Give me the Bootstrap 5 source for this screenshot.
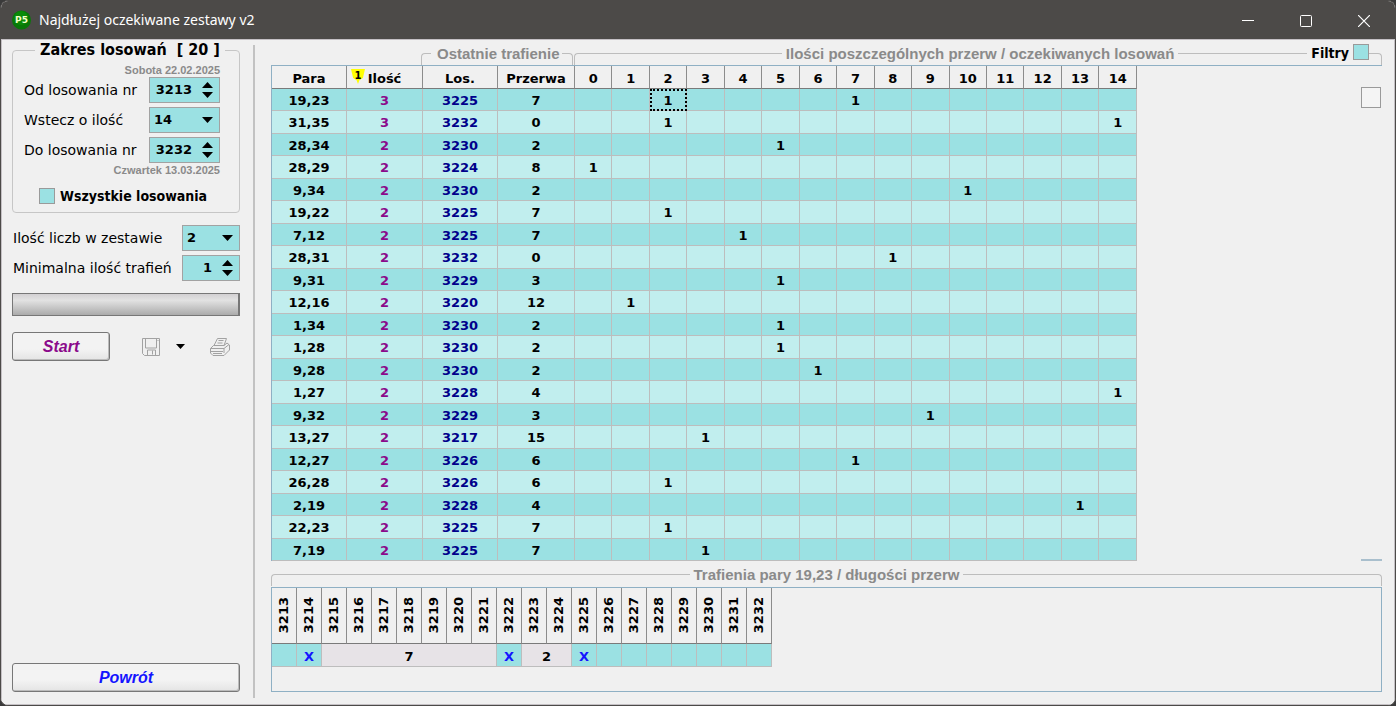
<!DOCTYPE html>
<html lang="pl">
<head>
<meta charset="utf-8">
<meta name="viewport" content="width=device-width, initial-scale=1">
<title>Najdłużej oczekiwane zestawy v2</title>
<link href="https://cdn.jsdelivr.net/npm/bootstrap@5.3.0/dist/css/bootstrap.min.css" rel="stylesheet">
<style>
  :root { --face:#f0f0f0; --aqua:#9be1e3; --aqua-light:#c1eeee; --line:#bdbdbd; --frame:#8fb0c4; --dim:#8a8a8a; }
  body { background:#3a3a3a; color:#000; font:14px/18px "DejaVu Sans", sans-serif; }
  .app-window { background:var(--face); border:1px solid #4c4a48; border-radius:8px; overflow:hidden; }
  .title-bar { background:#4c4a48; color:#fff; height:38px; font:14px/20px "Noto Sans", sans-serif; padding:0 2px 0 11px; }
  .title-bar .win-btn { width:58px; height:38px; border:0; background:none; color:#fff; padding:0; }
  .client { border:1px solid #c4c0c4; }
  .side-pane { width:251px; padding:0 13px 12px 10px; }
  .side-pane label { padding-left:1px; }
  .v-rule { width:2px; margin:5px 0 6px; background:#c2c2c2; }
  .range-box { border:1px solid #c6c6c6; border-radius:4px; padding:3px 19px 7px 10px; }
  .range-box legend { float:none; width:auto; margin:0 0 0 12px; padding:0 5px; font:bold 16px/20px "DejaVu Sans Condensed", "DejaVu Sans", sans-serif; white-space:pre; }
  .date-note { font:bold 11px/14px "Liberation Sans", sans-serif; color:var(--dim); text-align:right; }
  .all-draws { margin:10px 0 0 16px; }
  .field-box { width:71px; height:26px; background-color:var(--aqua); border:1px solid #a2a2a2; border-radius:0; font:bold 13px/18px "DejaVu Sans", sans-serif; color:#000; }
  .field-box.narrow { width:58px; }
  select.field-box { padding:0 22px 0 4px; background-position:right 6px center; background-size:11px 6px;
    background-image:url("data:image/svg+xml,%3Csvg xmlns='http://www.w3.org/2000/svg' viewBox='0 0 11 6'%3E%3Cpath d='M0 0h11L5.500 6z'/%3E%3C/svg%3E"); }
  .field-box input { min-width:0; flex:1; width:0; border:0; padding:0; background:none; font:inherit; text-align:right; appearance:textfield; outline:0; }
  .field-box input::-webkit-inner-spin-button { display:none; }
  .spin { width:11px; margin:0 6px 0 10px; }
  .spin button { border:0; padding:0; background:none; height:6px; line-height:0; }
  .tick { appearance:none; width:16px; height:16px; margin:0; background:var(--aqua); border:1px solid #9a9a9a; }
  .tick.big { width:20px; height:21px; background:#f4f4f4; }
  .strong-label { font:bold 14px/18px "DejaVu Sans Condensed", "DejaVu Sans", sans-serif; }
  .meter { height:23px; margin:12px 0 16px; border:1px solid #777; border-right-width:2px; background:linear-gradient(#d2d0d2,#e2e2e2 30%,#ababab); }
  .push { height:29px; padding:0; border:1px solid #777; border-radius:3px; background:linear-gradient(#f3f3f3 60%,#e4e4e4); box-shadow:inset -1px -1px #bbb; font:italic bold 16px/20px "Liberation Sans", sans-serif; }
  .push.start { width:98px; color:#8b0a8b; }
  .push.back { color:#1414ff; }
  .tool { border:0; padding:0; background:none; line-height:0; }
  .work-pane { padding:4px 12px 12px 16px; }
  .caption-text { font:bold 15px/20px "Liberation Sans", sans-serif; color:var(--dim); white-space:nowrap; }
  .edge-l, .edge-t, .edge-r { height:12px; border-top:1px solid var(--line); margin-top:9px; }
  .edge-l { border-left:1px solid var(--line); border-top-left-radius:4px; }
  .edge-r { border-right:1px solid var(--line); border-top-right-radius:4px; }
  .first-bracket { width:152px; margin-left:150px; }
  .first-bracket .edge-l { width:10px; }
  .first-bracket .caption-text { padding:0 2px 0 6px; }
  .second-bracket .edge-l { margin-left:1px; }
  .edge-t { width:129px; }
  .tail { width:13px; }
  .hits-head { height:22px; margin-top:4px; }
  .frame-top { border-top:1px solid var(--frame); border-left:1px solid var(--frame); }
  .grid-tab { border-collapse:separate; border-spacing:0; table-layout:fixed; font:bold 13px/18px "DejaVu Sans", sans-serif; text-align:center; }
  .grid-tab th, .grid-tab td { padding:0; overflow:hidden; border-right:1px solid var(--line); border-bottom:1px solid var(--line); white-space:nowrap; }
  .grid-tab th { border-right-color:#8c8c8c; border-bottom-color:#7a7a7a; }
  .c75 { width:75px; } .c76 { width:76px; } .c77 { width:77px; }
  .pairs { width:865px; }
  .pairs th { height:23px; padding-top:3px; }
  .pairs td { height:23px; padding-top:2px; background:var(--aqua-light); }
  .pairs tr:nth-child(odd) td { height:22px; background:var(--aqua); }
  .pairs td:nth-child(2) { color:#8b0a8b; }
  .pairs td:nth-child(3) { color:#00008b; }
  .pairs td.picked { outline:2px dotted #000; outline-offset:-2px; }
  .sort-mark { left:4px; top:3px; width:14px; height:15px; background:#ff0; clip-path:polygon(0 0,100% 0,85% 60%,60% 75%,50% 100%,40% 75%,15% 60%); font-size:10px; line-height:14px; }
  .hits-frame { border:1px solid var(--frame); }
  .hits { width:500px; }
  .hits th { height:56px; padding-top:5px; }
  .hits th span { writing-mode:vertical-rl; transform:rotate(180deg); line-height:20px; }
  .hits td { height:23px; padding-top:3px; background:var(--aqua); color:#1414ff; }
  .hits td.gap-run { background:#e7e3e7; color:#000; }
  .scroll-end { width:21px; border-bottom:2px solid #a9bfcd; padding-top:21px; }
</style>
</head>
<body>
<div class="app-window vh-100 d-flex flex-column">
  <header class="title-bar d-flex align-items-center flex-shrink-0">
    <svg width="19" height="20" viewBox="0 0 19 20"><circle cx="9.500" cy="10" r="9.500" fill="#087808"/><circle cx="9" cy="8" r="7" fill="#0a8a08"/><text x="9.500" y="13" text-anchor="middle" font-family="DejaVu Sans" font-weight="bold" font-size="9" fill="#f4ffc8">P5</text></svg>
    <span class="flex-grow-1 ps-1 ms-1 me-auto title-text">Najdłużej oczekiwane zestawy v2</span>
    <button class="win-btn" aria-label="Minimalizuj"><svg width="12" height="12"><path d="M0 5.500h12" stroke="#fff"/></svg></button>
    <button class="win-btn" aria-label="Maksymalizuj"><svg width="12" height="12"><rect x=".5" y=".5" width="11" height="11" rx="1" fill="none" stroke="#fff"/></svg></button>
    <button class="win-btn" aria-label="Zamknij"><svg width="12" height="12"><path d="M0 0l12 12M12 0L0 12" stroke="#fff" stroke-width="1.200"/></svg></button>
  </header>

  <main class="client d-flex flex-grow-1">
    <aside class="side-pane d-flex flex-column flex-shrink-0">
      <fieldset class="range-box">
        <legend>Zakres losowań  [ 20 ]</legend>
        <div class="date-note">Sobota 22.02.2025</div>
        <div class="d-flex flex-column gap-1">
          <div class="d-flex justify-content-between align-items-center">
            <label for="from">Od losowania nr</label>
            <div class="field-box d-flex align-items-center"><input id="from" type="number" value="3213"><span class="spin d-flex flex-column gap-1" data-spin></span></div>
          </div>
          <div class="d-flex justify-content-between align-items-center">
            <label for="back">Wstecz o ilość</label>
            <select id="back" class="form-select field-box"><option>14</option></select>
          </div>
          <div class="d-flex justify-content-between align-items-center">
            <label for="to">Do losowania nr</label>
            <div class="field-box d-flex align-items-center"><input id="to" type="number" value="3232"><span class="spin d-flex flex-column gap-1" data-spin></span></div>
          </div>
        </div>
        <div class="date-note">Czwartek 13.03.2025</div>
        <div class="all-draws d-flex align-items-center">
          <input class="tick" type="checkbox" id="all"><label class="strong-label ms-1" for="all">Wszystkie losowania</label>
        </div>
      </fieldset>

      <div class="d-flex flex-column gap-1 mt-2 pt-1">
        <div class="d-flex justify-content-between align-items-center">
          <label for="count">Ilość liczb w zestawie</label>
          <select id="count" class="form-select field-box narrow"><option>2</option></select>
        </div>
        <div class="d-flex justify-content-between align-items-center">
          <label for="min">Minimalna ilość trafień</label>
          <div class="field-box narrow d-flex align-items-center"><input id="min" type="number" value="1"><span class="spin d-flex flex-column gap-1" data-spin></span></div>
        </div>
      </div>
      <div class="meter" role="progressbar" aria-label="Postęp"></div>
      <div class="d-flex align-items-center">
        <button class="push start">Start</button>
        <button class="tool ms-4 ps-2" aria-label="Zapisz"><svg width="18" height="18" fill="none" stroke="#a2a2a2"><path d="M.5.5h17v17h-15l-2-2z"/><path d="M3.500.5v9.500h11V.5M5.500 17v-5h8v5M10.500 12.500v4M15.500 2.500h1"/></svg></button>
        <button class="tool ms-3" aria-label="Opcje zapisu"><svg width="9" height="6"><path d="M0 0h9L4.500 5z"/></svg></button>
        <button class="tool ms-4" aria-label="Drukuj"><svg width="22" height="18" fill="none" stroke="#a2a2a2"><path d="M5 7.500l3.500-7h9L15 7.500M9.500 2.500h5M8.500 5h5"/><path d="M4.500 7.500h10.500l3-2.500 2.500 2v5L15 17.500H4L1.500 15v-4.500zM1.500 10.500H15l5-4M15 10.500v4.500M2 13.500h12M4 15.500h9"/></svg></button>
      </div>
      <button class="push back mt-auto">Powrót</button>
    </aside>
    <div class="v-rule flex-shrink-0"></div>

    <section class="work-pane d-flex flex-column flex-grow-1">
      <div class="d-flex">
        <div class="first-bracket d-flex">
          <div class="edge-l"></div><span class="caption-text">Ostatnie trafienie</span><div class="edge-r flex-grow-1"></div>
        </div>
        <div class="second-bracket d-flex flex-grow-1">
          <div class="edge-l flex-grow-1"></div>
          <span class="caption-text px-1">Ilości poszczególnych przerw / oczekiwanych losowań</span>
          <div class="edge-t"></div>
          <label class="strong-label px-1" for="filters">Filtry</label><input class="tick" type="checkbox" id="filters">
          <div class="edge-r tail"></div>
        </div>
      </div>
      <div class="frame-top d-flex justify-content-between">
        <table class="grid-tab pairs">
          <colgroup><col class="c75"><col class="c76"><col class="c75"><col class="c77"></colgroup>
          <thead><tr id="head"><th>Para</th><th class="position-relative"><span class="sort-mark position-absolute">1</span>Ilość</th><th>Los.</th><th>Przerwa</th></tr></thead>
          <tbody id="rows"></tbody>
        </table>
        <div class="scroll-end"><input class="tick big" type="checkbox" aria-label="Filtr"></div>
      </div>

      <div class="d-flex hits-head">
        <div class="edge-l flex-grow-1"></div>
        <span class="caption-text px-1">Trafienia pary 19,23 / długości przerw</span>
        <div class="edge-r flex-grow-1"></div>
      </div>
      <div class="hits-frame flex-grow-1">
        <table class="grid-tab hits">
          <thead><tr id="draws"></tr></thead>
          <tbody><tr id="marks"></tr></tbody>
        </table>
      </div>
    </section>
  </main>
</div>
<script>
  // [pair, hits, last draw, gap, column holding the 1 ...]
  const pairs = [
    ["19,23",3,3225,7,2,7],["31,35",3,3232,0,2,14],["28,34",2,3230,2,5],["28,29",2,3224,8,0],["9,34",2,3230,2,10],
    ["19,22",2,3225,7,2],["7,12",2,3225,7,4],["28,31",2,3232,0,8],["9,31",2,3229,3,5],["12,16",2,3220,12,1],
    ["1,34",2,3230,2,5],["1,28",2,3230,2,5],["9,28",2,3230,2,6],["1,27",2,3228,4,14],["9,32",2,3229,3,9],
    ["13,27",2,3217,15,3],["12,27",2,3226,6,7],["26,28",2,3226,6,2],["2,19",2,3228,4,13],["22,23",2,3225,7,2],["7,19",2,3225,7,3]
  ];
  const cols = [...Array(15).keys()];
  document.getElementById("head").insertAdjacentHTML("beforeend", cols.map(c => `<th>${c}</th>`).join(""));
  document.getElementById("rows").innerHTML = pairs.map((p, r) => "<tr>" +
    p.slice(0, 4).map(v => `<td>${v}</td>`).join("") +
    cols.map(c => `<td${r === 0 && c === 2 ? ' class="picked"' : ""}>${p.slice(4).includes(c) ? 1 : ""}</td>`).join("") + "</tr>").join("");
  document.getElementById("draws").innerHTML = [...Array(20).keys()].map(i => `<th><span>${3213 + i}</span></th>`).join("");
  document.getElementById("marks").innerHTML = '<td></td><td>X</td><td class="gap-run" colspan="7">7</td><td>X</td><td class="gap-run" colspan="2">2</td><td>X</td>' + "<td></td>".repeat(7);
  document.querySelectorAll("[data-spin]").forEach(s => s.innerHTML =
    '<button aria-label="Więcej"><svg width="11" height="6"><path d="M0 6h11L5.500 0z"/></svg></button><button aria-label="Mniej"><svg width="11" height="6"><path d="M0 0h11L5.500 6z"/></svg></button>');
</script>
<script src="https://cdn.jsdelivr.net/npm/bootstrap@5.3.0/dist/js/bootstrap.bundle.min.js"></script>
</body>
</html>
